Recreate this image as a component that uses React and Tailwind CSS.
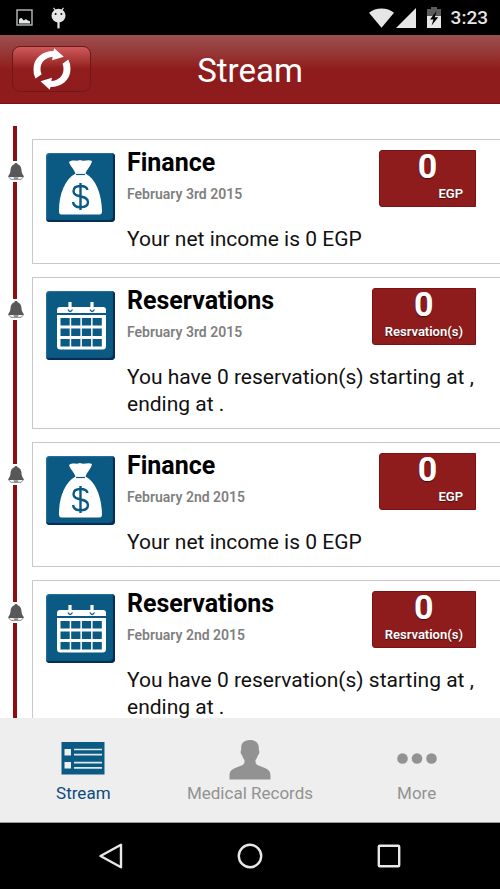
const entries = [
  { id: 1, type: "finance", title: "Finance", date: "February 3rd 2015", text: "Your net income is 0 EGP", count: 0, unit: "EGP" },
  { id: 2, type: "reservations", title: "Reservations", date: "February 3rd 2015", text: "You have 0 reservation(s) starting at , ending at .", count: 0, unit: "Resrvation(s)" },
  { id: 3, type: "finance", title: "Finance", date: "February 2nd 2015", text: "Your net income is 0 EGP", count: 0, unit: "EGP" },
  { id: 4, type: "reservations", title: "Reservations", date: "February 2nd 2015", text: "You have 0 reservation(s) starting at , ending at .", count: 0, unit: "Resrvation(s)" },
];

function StatusBar() {
  return (
    <div className="h-[35px] shrink-0 bg-black flex items-center justify-between pl-4 pr-3">
      <div className="flex items-center gap-[18px]">
        <svg width="17" height="17" viewBox="0 0 17 17">
          <rect x="1" y="1" width="15" height="15" fill="none" stroke="#b8bcbe" strokeWidth="1.4" />
          <path d="M3 14.500V11c.5-1.500 2-2.500 3-1.500s1.500 2.500 2.500 1.500c.8-1 2-1 2.700 0 1 1 2 .3 2.800 1.500v2z" fill="#e6e6e6" />
        </svg>
        <svg width="15" height="22" viewBox="0 0 15 22">
          <path d="M2.5.8 4.5 3.5M12.5.8l-2 2.7" stroke="#e6e6e6" strokeWidth="1.2" />
          <ellipse cx="7.5" cy="8.7" rx="7" ry="6.9" fill="#e6e6e6" />
          <path d="M6.4 15h2.2v6.4H6.4z" fill="#e6e6e6" />
          <circle cx="4.6" cy="7" r="1" fill="#111" />
          <circle cx="10.4" cy="7" r="1" fill="#111" />
        </svg>
      </div>
      <div className="flex items-center">
        <svg width="25" height="20" viewBox="0 0 25 20">
          <path d="M0 4.800C6.500-1 18.500-1 25 4.800L12.500 19.800z" fill="#e6e6e6" />
        </svg>
        <svg className="ml-0.5" width="20" height="20" viewBox="0 0 20 20">
          <path d="M0 20 20 0v20z" fill="#e6e6e6" />
        </svg>
        <svg className="ml-[11px]" width="14" height="21" viewBox="0 0 14 21">
          <path d="M0 2h4V0h6v2h4v7H0z" fill="#5c5c5c" />
          <path d="M0 9h14v12H0z" fill="#e6e6e6" />
          <path d="M9.500 4 3 12.600h3.400L4.600 18.500l6.600-8.200H7.800z" fill="#000" />
        </svg>
        <span className="ml-2.5 text-[19px] leading-6 font-medium text-[#e6e6e6]">3:23</span>
      </div>
    </div>
  );
}

function Header() {
  return (
    <header className="h-[69px] shrink-0 grid grid-cols-[1fr_auto_1fr] items-center px-3 border-b border-[#850c0c] bg-linear-to-b from-[#9c4f50] from-0% via-[#8f1c1c] via-50% to-[#8f1c1c]">
      <button
        type="button"
        aria-label="Refresh"
        className="w-[79px] h-[46px] rounded-lg border border-[#6f1818] bg-linear-to-b from-[#cf5a5b] from-0% via-[#911d1d] via-50% to-[#8f1c1c] flex items-center justify-center"
      >
        <svg width="40" height="42" viewBox="0 0 40 42" fill="#fff">
          <path d="M3.500 30.500A18 18 0 0 1 1.500 21C1.500 10 10.500 3 21.500 3L22.200.300l9.600 8.500-11.800 3.400.7-3.200C13.500 9.500 8.500 14 8.500 21c0 2.200.5 3.500 1.200 5.300z" />
          <path d="M36.300 11.500a18 18 0 0 1 2.200 9.500c0 11-9 18-20 18l-.7 2.700L8.500 33.200l11.500-3.400-.7 3.200c7.200-.5 12.200-5 12.200-12 0-2-.3-3.500-1-5.200z" />
        </svg>
      </button>
      <h1 className="pt-1 text-[33px] leading-10 text-white">Stream</h1>
    </header>
  );
}

function BellIcon() {
  return (
    <svg className="ml-2" width="16" height="21" viewBox="0 0 16 21">
      <path d="M8 2c1 0 1.500.6 1.600 1.300C12 4.100 13.200 6 13.400 8.500c.2 3 .8 4.500 2.300 6.500v1.300H.3V15C1.800 13 2.400 11.500 2.600 8.500 2.800 6 4 4.100 6.400 3.300 6.500 2.600 7 2 8 2z" fill="#58585a" />
      <path d="M.8 16.200 3 18.300h10l2.200-2.100" fill="#fff" stroke="#777" strokeWidth=".9" />
      <path d="M5.500 16.300h5l-1 2.200h-3z" fill="#8a8a8a" />
    </svg>
  );
}

function MoneyBag() {
  return (
    <svg width="69" height="69" viewBox="0 0 69 69">
      <path d="M23 9c4-3 7 0 11-2 4 2 8-1 12 1-1 5-5 8-6.500 12.500C50 26 55.500 41 56 58c0 3-1 3.500-4 3.500H17c-3 0-4-.5-4-3.500C13 41 19 26 29.500 20.500 28 16 24 13 23 9z" fill="#fff" />
      <path d="M30 21.500h9" stroke="#0b5a84" strokeWidth="1.200" />
      <path d="M16 37c2-6 4.500-10 8-13" stroke="#0b5a84" strokeWidth=".8" strokeDasharray="2 1" fill="none" />
      <path d="M34.500 30v27M41.500 37c-.7-3.300-3.500-4-7-4-4 0-7 1.500-7 5.200 0 7.500 14.500 3 14.500 10.800 0 4-3.500 5.300-7.500 5.300S27.500 52.500 27 49" fill="none" stroke="#0b5a84" strokeWidth="2.400" />
    </svg>
  );
}

function Calendar() {
  return (
    <svg width="69" height="69" viewBox="0 0 69 69">
      <path d="M11 22v-3c0-2 1-3 3-3h43c2 0 3 1 3 3v3z" fill="#fff" />
      <path d="M11 24h49v31c0 2.500-1 3.500-3.500 3.500h-42c-2.500 0-3.500-1-3.500-3.500z" fill="#fff" />
      <path d="M24 11v8M46 11v8" stroke="#fff" strokeWidth="3.200" />
      <path d="M22 18.500q2 4 4.500 0M44 18.500q2 4 4.500 0" stroke="#0b5a84" strokeWidth="1.300" fill="none" />
      {[27, 37.5, 48].map((y) =>
        [14.5, 25.2, 35.900, 46.600].map((x) => (
          <rect key={x + "-" + y} x={x} y={y} width="9.200" height="7.500" fill="#0b5a84" />
        ))
      )}
    </svg>
  );
}

function StreamItem({ entry }) {
  return (
    <li className="flex">
      {/* timeline rail */}
      <div className="w-8 shrink-0 flex flex-col">
        <div className="ml-[13px] w-1 h-[35px] bg-[#8b0f12]"></div>
        <BellIcon />
        <div className="ml-[13px] w-1 flex-1 bg-[#8b0f12]"></div>
      </div>

      <article className="flex-1 min-w-0 mt-[13px] border border-r-0 border-[#c8c8c8] pl-[13px] pr-6 pb-2.5 flex gap-3">
        <div className="mt-[13px] size-[69px] shrink-0 rounded-[4px] bg-[#0b5a84] shadow-[inset_-2px_-2px_1px_#062c55,inset_1px_1px_1px_#2a7199]">
          {entry.type === "finance" ? <MoneyBag /> : <Calendar />}
        </div>
        <div className="flex-1 min-w-0">
          <div className="flex justify-between">
            <div className="pt-[9px]">
              <h2 className="text-[25px] leading-7 font-bold text-black">{entry.title}</h2>
              <p className="mt-[7px] text-[14px] leading-5 font-semibold text-[#7f7f7f]">{entry.date}</p>
            </div>
            <div className="mt-2.5 h-[57px] min-w-[97px] px-3 rounded-l-[3px] border border-[#7d1214] bg-[#8f1c1c] text-white font-semibold text-shadow-[0_1px_1px_#0008]">
              <p className="text-[34px] leading-[30px] font-bold text-center">{entry.count}</p>
              <p className="text-[13px] leading-[26px] text-right">{entry.unit}</p>
            </div>
          </div>
          <p className="mt-[19px] -mr-6 text-[21px] leading-[27px] text-[#111]">{entry.text}</p>
        </div>
      </article>
    </li>
  );
}

function TabBar() {
  return (
    <nav className="h-[105px] shrink-0 bg-[#eeeeee] border-b border-[#999] grid grid-cols-3 text-[17px] leading-6 text-[#929292]">
      <a href="#stream" className="flex flex-col items-center pt-5 text-[#0b4a80]">
        <svg width="44" height="42" viewBox="0 0 44 42">
          <path d="M.500 4h43v32.500H.500z" fill="#0b5a84" />
          <path d="M3.500 11h6.500v6.500H3.500zM3.500 24h6.500v6.500H3.500z" fill="#eee" />
          <path d="M13 11.500h28M13 16.700h28M13 24.700h28M13 29.800h28" stroke="#dfe7ec" strokeWidth="1.700" />
        </svg>
        <span className="mt-px">Stream</span>
      </a>
      <a href="#records" className="flex flex-col items-center pt-5">
        <svg width="42" height="42" viewBox="0 0 42 42">
          <path d="M21 2c5.500 0 9 3 8.800 8 0 1.300-.2 2 .5 3 .4 2-.5 3.500-1.500 4.500-.6 2-1.500 3.500-2.300 4.500-.3 3 .5 4.500 3 5.500l7 2.800c3.800 1.700 5 4 5 7.700v3.500H.5V38c0-3.700 1.200-6 5-7.700l7-2.800c2.500-1 3.300-2.500 3-5.500-.8-1-1.700-2.500-2.300-4.500-1-1-1.900-2.500-1.500-4.500.7-1 .5-1.700.5-3C12 5 15.500 2 21 2z" fill="#929292" />
        </svg>
        <span className="mt-px">Medical Records</span>
      </a>
      <a href="#more" className="flex flex-col items-center pt-5">
        <svg width="42" height="42" viewBox="0 0 42 42" fill="#929292">
          <circle cx="6.500" cy="20.500" r="5.300" />
          <circle cx="21" cy="20.500" r="5.300" />
          <circle cx="35.500" cy="20.500" r="5.300" />
        </svg>
        <span className="mt-px">More</span>
      </a>
    </nav>
  );
}

function SystemNav() {
  return (
    <div className="h-[66px] shrink-0 bg-black flex items-center justify-center gap-[111px]">
      <button type="button" aria-label="Back">
        <svg width="28" height="28" viewBox="0 0 28 28">
          <path d="M3.500 14 24 2.800v22.400z" fill="none" stroke="#e8e8e8" strokeWidth="2.400" strokeLinejoin="round" />
        </svg>
      </button>
      <button type="button" aria-label="Home">
        <svg width="28" height="28" viewBox="0 0 28 28">
          <circle cx="14" cy="14" r="11.200" fill="none" stroke="#e8e8e8" strokeWidth="2.400" />
        </svg>
      </button>
      <button type="button" aria-label="Recent apps">
        <svg width="28" height="28" viewBox="0 0 28 28">
          <rect x="3.800" y="3.800" width="20.400" height="20.400" rx="1" fill="none" stroke="#e8e8e8" strokeWidth="2.400" />
        </svg>
      </button>
    </div>
  );
}

export default function App() {
  return (
    <div className="h-screen flex flex-col overflow-hidden bg-white font-[Roboto,sans-serif]">
      <StatusBar />
      <Header />
      <main className="flex-1 min-h-0 overflow-hidden pt-[22px]">
        <ul>
          {entries.map((entry) => (
            <StreamItem key={entry.id} entry={entry} />
          ))}
        </ul>
      </main>
      <TabBar />
      <SystemNav />
    </div>
  );
}
